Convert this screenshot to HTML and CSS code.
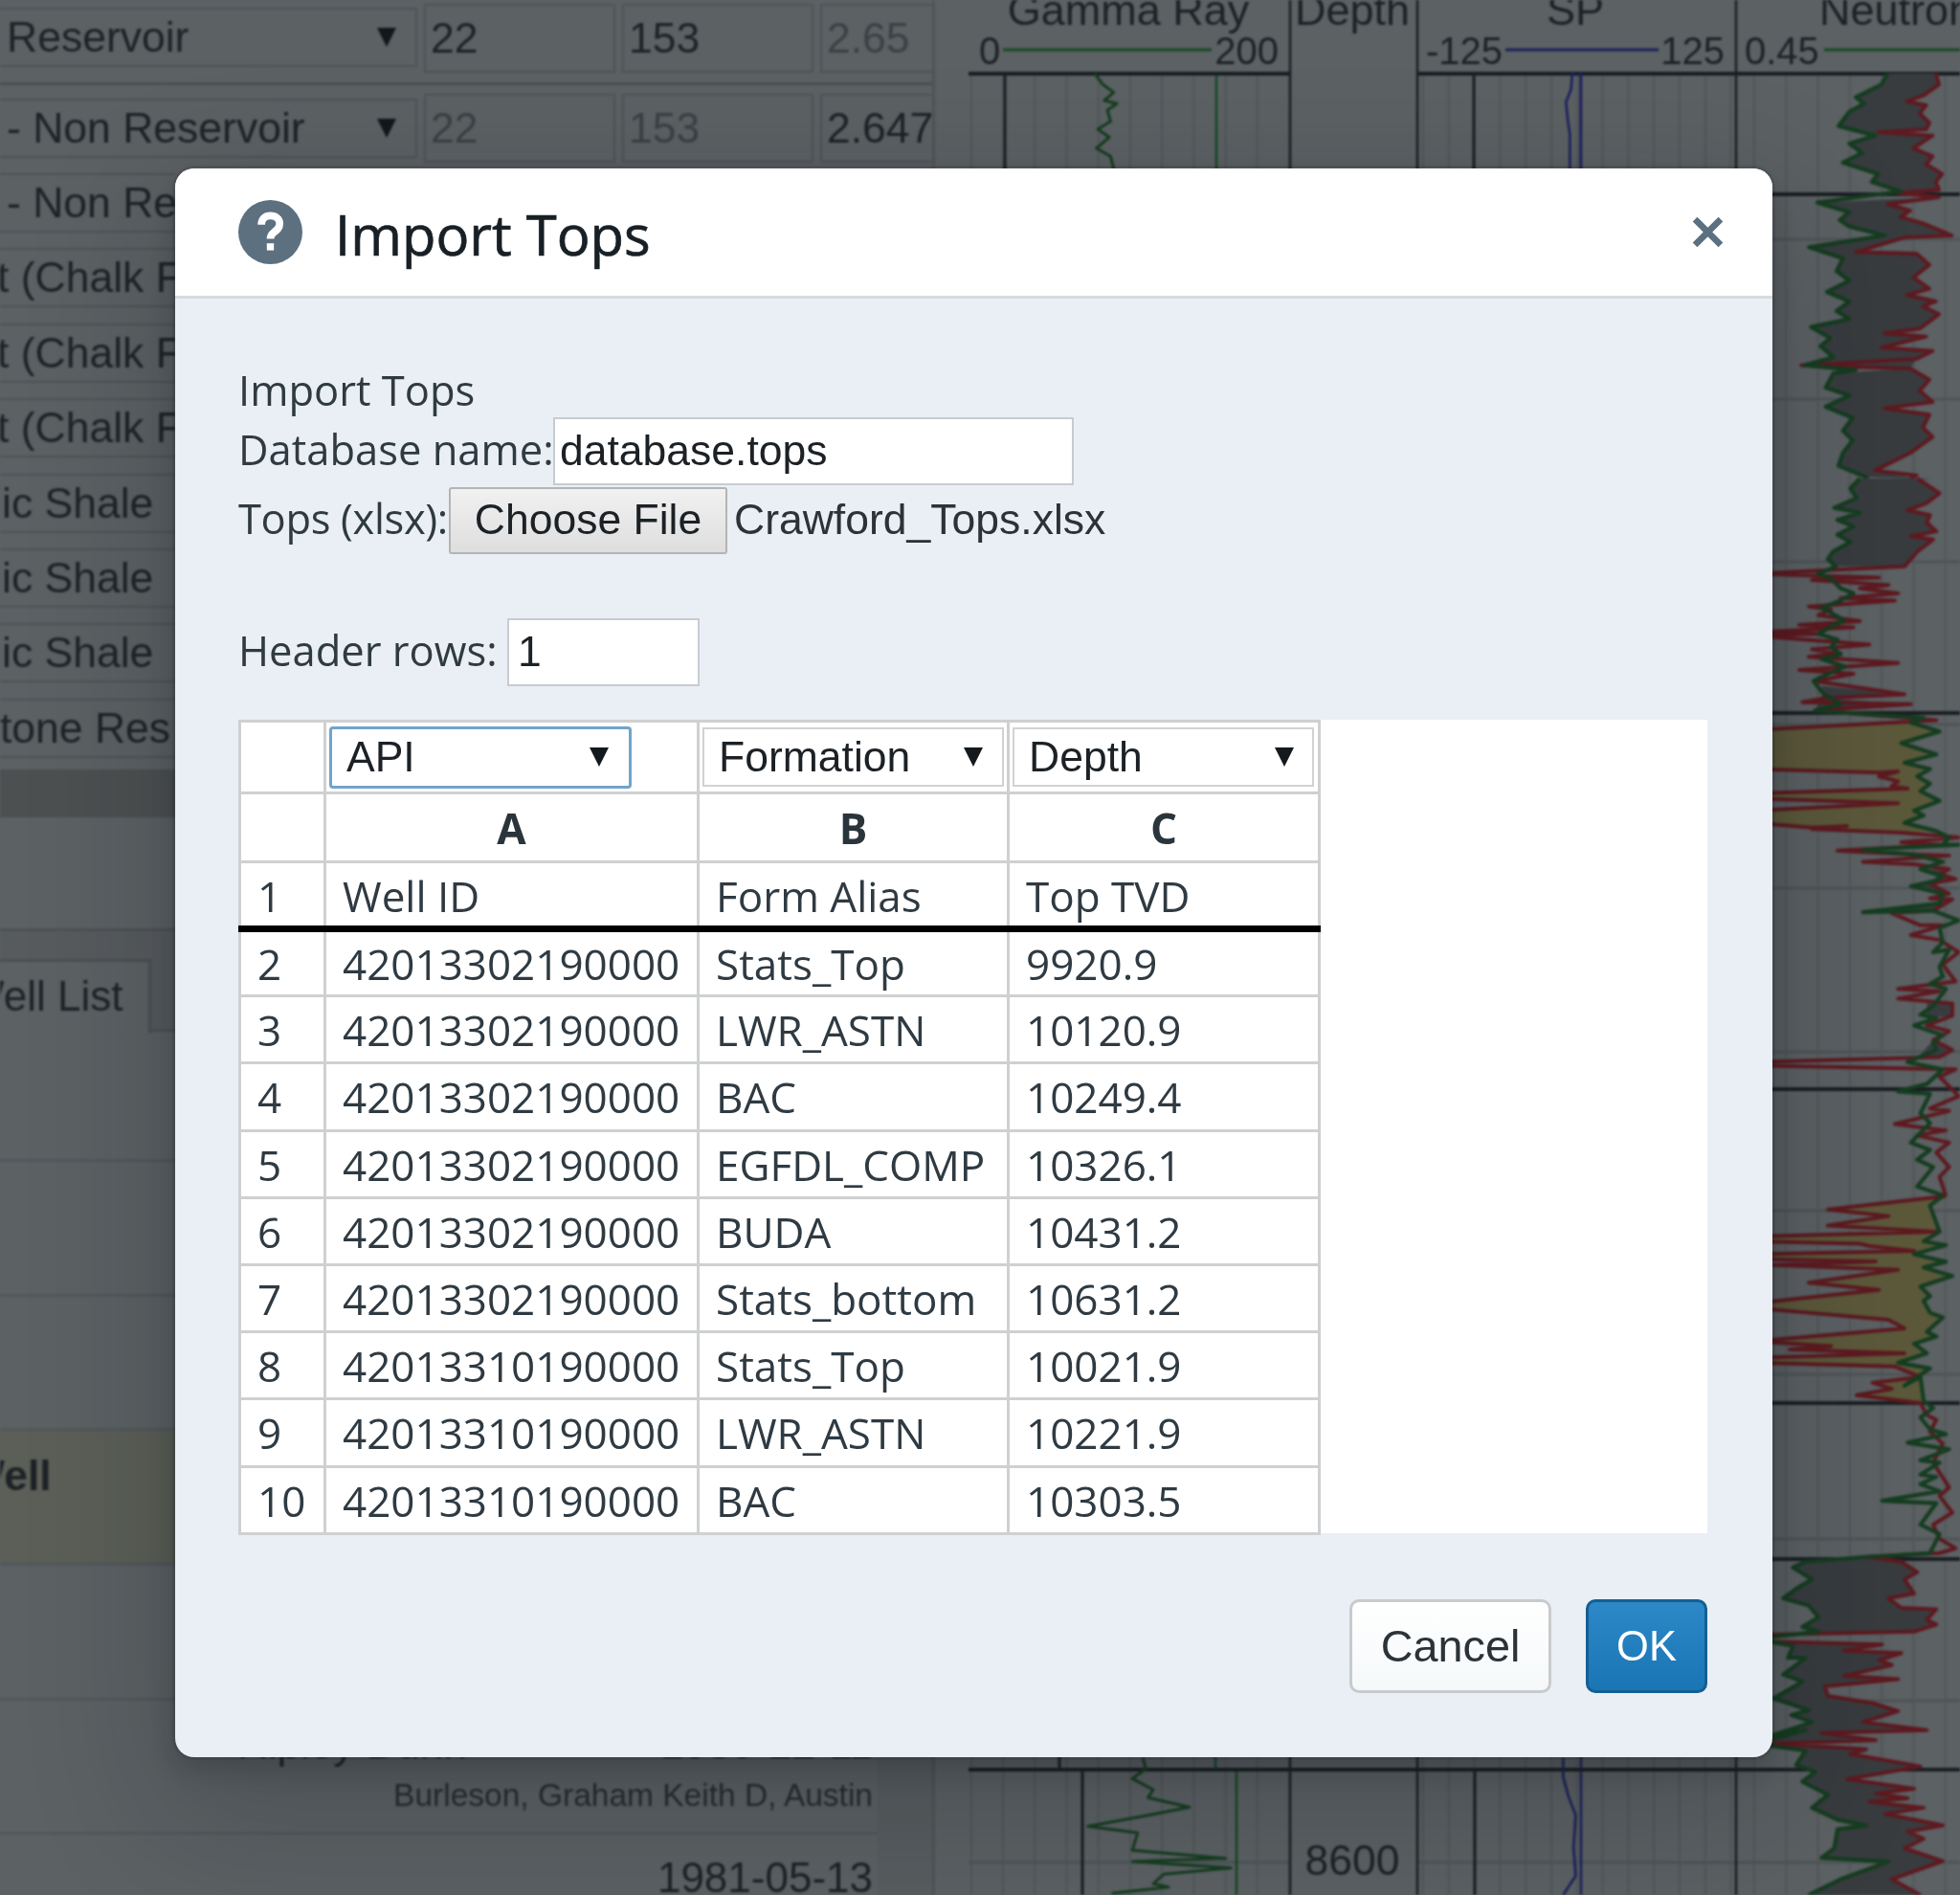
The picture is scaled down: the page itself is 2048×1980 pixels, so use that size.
FILE: index.html
```html
<!DOCTYPE html>
<html lang="en">
<head>
<meta charset="utf-8">
<title>Import Tops</title>
<link rel="stylesheet" href="styles.css">
</head>
<body>
<div class="app">
  <aside class="panel">
    <section class="formations">
      <div class="frow frow-first">
        <div class="fsel"><span>Reservoir</span><i class="arrow"></i></div>
        <input class="fnum" value="22"><input class="fnum" value="153"><input class="fnum off" value="2.65">
      </div>
      <div class="frow frow-second">
        <div class="fsel"><span>- Non Reservoir</span><i class="arrow"></i></div>
        <input class="fnum off" value="22"><input class="fnum off" value="153"><input class="fnum" value="2.647">
      </div>
      <div class="frow"><div class="fsel fsel-s"><span>- Non Re</span></div></div>
      <div class="frow"><div class="fsel fsel-s clip"><span>t (Chalk F</span></div></div>
      <div class="frow"><div class="fsel fsel-s clip"><span>t (Chalk F</span></div></div>
      <div class="frow"><div class="fsel fsel-s clip"><span>t (Chalk F</span></div></div>
      <div class="frow"><div class="fsel fsel-s clip clip-ic"><span>ic Shale</span></div></div>
      <div class="frow"><div class="fsel fsel-s clip clip-ic"><span>ic Shale</span></div></div>
      <div class="frow"><div class="fsel fsel-s clip clip-ic"><span>ic Shale</span></div></div>
      <div class="frow"><div class="fsel fsel-s clip clip-tone"><span>tone Res</span></div></div>
    </section>
    <div class="band"></div>
    <div class="tabs"><div class="tab">Well List</div></div>
    <div class="wells">
      <div class="list">
        <div class="well well-first"></div>
        <div class="well"></div>
        <div class="well"></div>
        <div class="well well-on"><b>Well</b></div>
        <div class="well"></div>
        <div class="well well-meta">
          <div class="meta-top"><span>Ripley Dunn</span><span>1980-12-11</span></div>
          <div class="meta-sub">Burleson, Graham Keith D, Austin</div>
        </div>
        <div class="well well-date"><div class="meta-top"><span></span><span>1981-05-13</span></div></div>
      </div>
      <div class="rail"></div>
    </div>
  </aside>
  <main class="logs">
    <svg class="logsvg" viewBox="1012 0 1036 1980" width="1036" height="1980" xmlns="http://www.w3.org/2000/svg">
      <defs>
        <pattern id="g33" x="1014" y="0" width="33.2" height="10" patternUnits="userSpaceOnUse"><rect width="2" height="10" class="gridfill"/></pattern>
        <pattern id="g27" x="1486" y="0" width="26.8" height="10" patternUnits="userSpaceOnUse"><rect width="2" height="10" class="gridfill"/></pattern>
        <pattern id="g33n" x="1832" y="0" width="33.3" height="10" patternUnits="userSpaceOnUse"><rect width="2" height="10" class="gridfill"/></pattern>
      </defs>
      <rect x="1012" y="77" width="336" height="1903" fill="url(#g33)"/>
      <rect x="1481" y="77" width="333" height="1903" fill="url(#g27)"/>
      <rect x="1814" y="77" width="234" height="1903" fill="url(#g33n)"/>

      <path class="minor" d="M1012 250H1348M1481 250H2048M1012 417H1348M1481 417H2048M1012 587H1348M1481 587H2048M1012 757H1348M1481 757H2048M1012 928H1348M1481 928H2048M1012 1099H1348M1481 1099H2048M1012 1265H1348M1481 1265H2048M1012 1436H1348M1481 1436H2048M1012 1608H1348M1481 1608H2048M1012 1777H1348M1481 1777H2048M1012 1946H1348M1481 1946H2048"/>

      <path class="major" d="M1050 77V203M1107 1629V1849M1131 1849V1980M1540 77V203M1541 1849V1980"/>
      <path class="gvert" d="M1271 77V203M1270 1629V1849M1292 1849V1980"/>
      <path class="bvert" d="M1652 77V203M1652 1629V1980"/>
      <path class="divider" d="M1348 0V1980M1481 0V1980M1814 0V1980"/>
      <path class="thick" d="M1012 77H1348M1481 77H2048M1012 203H2048M1012 745H2048M1012 1138H2048M1012 1466H2048M1012 1629H2048M1012 1849H2048"/>

      <g class="z2">
        <polygon class="fill-dark" points="1455,230 1445,265 1405,305 1418,325 1395,350 1378,395 1435,425 1395,450 1415,480 1385,510 1440,545 1430,570 1475,600 1470,605 1535,595 1530,570 1540,545 1515,515 1525,490 1495,465 1525,425 1440,415 1515,405 1520,385 1505,355 1515,330 1485,318 1510,300 1535,265 1530,230"/>
        <polygon class="fill-dark" points="1345,635 1395,665 1380,690 1395,710 1450,738 1332,775 1385,810 1375,850 1395,880 1360,915 1395,945 1375,975 1395,1000 1335,1025 1365,1060 1350,1085 1370,1120 1325,1145 1490,1155 1500,1125 1525,1100 1445,1090 1515,1055 1450,1045 1505,1030 1535,985 1510,960 1530,945 1485,925 1520,905 1495,870 1520,830 1500,795 1405,790 1480,745 1555,738 1510,700 1475,680 1490,660 1455,640 1535,618"/>
        <polygon class="fill-dark" points="1370,1170 1358,1215 1395,1240 1358,1275 1400,1310 1385,1350 1400,1380 1385,1420 1378,1460 1420,1495 1500,1500 1435,1475 1490,1420 1525,1370 1510,1340 1520,1300 1450,1280 1525,1260 1505,1225 1520,1190 1490,1155"/>
        <polyline class="red" points="1530,230 1535,265 1510,300 1485,318 1515,330 1505,355 1520,385 1515,405 1440,415 1525,425 1495,465 1525,490 1515,515 1540,545 1530,570 1535,595 1470,605 1535,618 1455,640 1490,660 1475,680 1510,700 1555,738 1480,745 1405,790 1500,795 1520,830 1495,870 1520,905 1485,925 1530,945 1510,960 1535,985 1505,1030 1450,1045 1515,1055 1445,1090 1525,1100 1500,1125 1320,1145 1490,1155 1520,1190 1505,1225 1525,1260 1450,1280 1520,1300 1510,1340 1525,1370 1490,1420 1435,1475 1500,1490 1490,1500"/>
        <polyline class="green" points="1455,230 1445,265 1405,305 1418,325 1395,350 1378,395 1435,425 1395,450 1415,480 1385,510 1440,545 1430,570 1475,600 1345,635 1395,665 1380,690 1395,710 1450,738 1332,775 1385,810 1375,850 1395,880 1360,915 1395,945 1375,975 1395,1000 1335,1025 1365,1060 1350,1085 1370,1120 1325,1145 1405,1160 1370,1170 1358,1215 1395,1240 1358,1275 1400,1310 1385,1350 1400,1380 1385,1420 1378,1460 1420,1495 1425,1500"/>
        <polyline class="green thin" points="215,230 228,265 245,290 230,315 250,325 235,345 240,380 220,405 238,430 218,465 240,490 245,530"/>
        <polyline class="blue thin" points="962,225 960,280 952,320 955,380 958,420 958,530"/>
        <line class="blue thin" x1="975" y1="225" x2="975" y2="530"/>
        <line class="blue thin" x1="962" y1="225" x2="962" y2="240"/>
      </g>

      <g class="z3">
        <polygon class="fill-dark" points="430,0 400,20 420,40 350,60 430,70 360,85 410,98 360,115 400,130 345,150 330,165 355,180 570,180 610,150 660,125 590,118 670,108 640,90 650,75 580,65 640,50 680,30 610,5 650,0"/>
        <polygon class="fill-dark" points="310,425 570,442 320,450 590,462 290,475 315,440"/>
        <polygon class="fill-olive" points="590,500 680,518 560,542 670,565 570,582 650,595 610,610 650,625 620,640 680,660 600,680 630,690 570,705 670,722 560,725 280,718 390,712 280,715 100,705 100,680 550,665 100,655 100,645 580,635 530,630 550,620 490,610 550,600 490,602 100,595 100,515"/>
        <polygon class="fill-dark" points="620,800 690,815 660,825 590,835 690,850 680,870 440,888 660,885 720,862 650,860 710,850 650,830 730,820 680,810 710,800"/>
        <polygon class="fill-dark" points="640,1075 720,1075 720,1100 640,1105"/>
        <polygon class="fill-dark" points="660,1150 720,1170 680,1185 620,1180"/>
        <polyline class="red" points="610,0 680,30 640,50 580,65 650,75 640,90 670,108 590,118 660,125 610,150 570,180 100,195 490,203 280,208 520,218 430,225 550,235 370,245 540,250 270,262 340,268 300,280 430,292 240,300 410,305 100,315 300,318 100,322 460,340 280,350 370,358 270,365 550,378 240,392 410,400 290,415 570,442 320,450 250,458 590,462 290,475 670,495 100,515 100,595 490,602 550,600 490,610 550,620 530,630 580,635 100,645 100,655 550,665 100,680 100,705 280,715 390,712 280,718 560,725 740,735 560,745 690,750 360,762 440,765 600,770 710,772 440,785 600,790 710,800 680,810 730,820 650,830 710,850 650,860 720,862 660,885 530,890 620,915 690,915 590,935 680,945 740,970 690,995 730,1030 550,1045 680,1050 550,1065 720,1075 720,1100 640,1120 710,1132 660,1150 720,1170 680,1185 100,1195 100,1202 730,1210 680,1225 710,1245 740,1265 650,1290 710,1295 540,1322 700,1335 610,1345 710,1360 670,1380 710,1410 680,1430 700,1470"/>
        <polyline class="green" points="430,0 400,20 420,40 350,60 430,70 360,85 410,98 360,115 400,130 345,150 330,165 355,180 300,195 340,205 370,225 410,235 370,250 310,265 340,275 380,290 300,318 360,330 340,345 370,360 310,370 385,385 330,400 285,415 315,440 370,462 290,475 430,482 630,490 590,500 680,518 560,542 670,565 570,582 650,595 610,610 650,625 620,640 680,660 600,680 630,690 570,705 670,722 710,735 690,750 740,750 440,760 600,770 690,785 620,800 690,815 660,825 590,835 690,850 680,870 440,888 660,885 740,905 680,920 690,950 660,970 710,965 680,1000 690,1020 650,1035 700,1045 660,1080 620,1098 670,1105 600,1120 690,1140 660,1155 670,1170 580,1195 690,1210 640,1240 550,1255 650,1260 620,1300 650,1320 590,1360 650,1375 610,1395 660,1410 610,1450 700,1470"/>
      </g>

      <g class="z4">
        <polygon class="fill-olive" points="690,100 650,120 680,175 630,195 700,203 600,222 700,238 630,250 720,268 620,290 650,310 630,320 650,345 690,355 640,385 670,395 600,410 640,430 550,450 650,462 570,498 620,480 630,530 620,535 420,518 530,505 470,492 620,480 540,458 100,450 100,440 570,430 210,422 340,415 100,405 570,378 520,360 100,335 100,325 490,297 270,282 550,255 160,245 480,237 100,232 100,222 600,215 460,205 430,200 100,195 100,185 670,175 330,162 520,142 330,128"/>
        <polygon class="fill-dark" points="450,858 260,868 220,880 280,905 230,925 190,945 270,960 300,985 250,1005 300,1015 100,1030 220,1045 205,1070 260,1070 190,1105 250,1120 160,1155 270,1180 215,1190 280,1205 160,1232 260,1222 100,1250 260,1265 230,1295 290,1310 250,1330 330,1358 280,1385 360,1410 450,1422 360,1430 350,1470 310,1490 520,1498 370,1535 310,1555 270,1568 620,1568 530,1535 690,1497 570,1470 630,1450 580,1435 690,1422 600,1410 510,1398 630,1385 460,1372 580,1365 480,1355 600,1345 390,1325 620,1298 400,1272 450,1262 160,1250 480,1243 310,1228 640,1222 440,1205 550,1182 470,1165 330,1150 320,1130 550,1115 380,1108 530,1085 490,1075 560,1060 380,1055 500,1042 100,1035 100,1022 600,1015 670,1000 640,990 670,968 560,965 520,945 600,935 570,905 610,890 560,868"/>
        <polyline class="red" points="700,100 330,128 520,142 330,162 670,175 100,185 100,195 430,200 460,205 600,215 100,222 100,232 480,237 160,245 550,255 270,282 490,297 100,325 100,335 520,360 570,378 100,405 340,415 210,422 570,430 100,440 100,450 540,458 620,480 470,492 530,505 420,518 620,535 640,560 670,570 650,595 690,620 660,660 710,712 680,730 720,765 660,790 680,820 730,840 680,850 450,858 560,868 610,890 570,905 600,935 520,945 560,965 670,968 640,990 670,1000 600,1015 100,1022 100,1035 500,1042 380,1055 560,1060 490,1075 530,1085 380,1108 550,1115 320,1130 330,1150 470,1165 550,1182 440,1205 640,1222 310,1228 480,1243 160,1250 450,1262 400,1272 620,1298 390,1325 600,1345 480,1355 580,1365 460,1372 630,1385 510,1398 600,1410 690,1422 580,1435 630,1450 570,1470 690,1497 530,1535 620,1568"/>
        <polyline class="green" points="690,100 650,120 680,175 630,195 700,203 600,222 700,238 630,250 720,268 620,290 650,310 630,320 650,345 690,355 640,385 670,395 600,410 640,430 550,450 650,462 570,498 620,480 630,530 660,545 620,565 650,590 700,600 580,618 710,632 620,655 680,660 620,685 670,690 620,705 680,720 500,740 670,745 620,790 680,810 650,850 450,858 260,868 220,880 280,905 230,925 190,945 270,960 300,985 250,1005 300,1015 100,1030 220,1045 205,1070 260,1070 190,1105 250,1120 160,1155 270,1180 215,1190 280,1205 160,1232 260,1222 100,1250 260,1265 230,1295 290,1310 250,1330 330,1358 280,1385 360,1410 450,1422 360,1430 350,1470 310,1490 520,1498 370,1535 310,1555 270,1568"/>
      </g>

      <g class="z6">
        <polyline class="green thin" points="935,170 938,205 925,235 945,270 940,295 960,310 980,325 940,350 882,385 930,405 925,460 1015,485 925,495 1020,515 955,535 945,565 960,575 905,595"/>
        <polyline class="blue thin" points="1340,170 1340,230 1345,290 1352,350 1350,450 1352,540 1340,600"/>
      </g>

      <text class="lt" x="1179" y="26" text-anchor="middle">Gamma Ray</text>
      <text class="lt" x="1413" y="26" text-anchor="middle">Depth</text>
      <text class="lt" x="1646" y="26" text-anchor="middle">SP</text>
      <text class="lt" x="1901" y="26">Neutron</text>
      <text class="ls" x="1023" y="67">0</text>
      <text class="ls" x="1336" y="67" text-anchor="end">200</text>
      <text class="ls" x="1490" y="67">-125</text>
      <text class="ls" x="1802" y="67" text-anchor="end">125</text>
      <text class="ls" x="1823" y="67">0.45</text>
      <line class="gscale" x1="1048" y1="52" x2="1266" y2="52"/>
      <line class="bscale" x1="1573" y1="52" x2="1733" y2="52"/>
      <line class="gscale" x1="1906" y1="52" x2="2048" y2="52"/>
      <text class="ld" x="1413" y="1959" text-anchor="middle">8600</text>
    </svg>
  </main>
</div>

<div class="backdrop"></div>

<div class="dialog">
  <header class="dlg-head">
    <svg class="dlg-icon" viewBox="0 0 20 20" xmlns="http://www.w3.org/2000/svg">
      <circle cx="10" cy="10" r="10" class="help-disc"/>
      <path class="help-mark" d="M7.2 7.7C7.2 5.9 8.4 4.9 10 4.9c1.7 0 2.9 1 2.9 2.5 0 1.3-.8 1.9-1.7 2.6-.8.6-1.2 1.1-1.2 2.1"/>
      <rect class="help-dot" x="8.9" y="13.5" width="2.2" height="2.2"/>
    </svg>
    <h1 class="dlg-title">Import Tops</h1>
    <svg class="dlg-close" viewBox="0 0 32 32" xmlns="http://www.w3.org/2000/svg"><path d="M3 3L29 29M29 3L3 29"/></svg>
  </header>
  <div class="dlg-body">
    <div class="line line-title">Import Tops</div>
    <div class="line line-db"><label class="lab lab-db">Database name:</label><input class="txt txt-db" value="database.tops"></div>
    <div class="line line-file"><label class="lab lab-file">Tops (xlsx):</label><button class="filebtn">Choose File</button><span class="filename">Crawford_Tops.xlsx</span></div>
    <div class="line line-hdr"><label class="lab lab-hdr">Header rows:</label><input class="txt txt-hdr" value="1"></div>
    <div class="sheet">
      <table class="grid">
        <colgroup><col class="c0"><col class="c1"><col class="c2"><col class="c3"></colgroup>
        <tr class="r-pick">
          <td></td>
          <td><div class="pick pick-focus"><span>API</span><i class="arrow"></i></div></td>
          <td><div class="pick pick-b"><span>Formation</span><i class="arrow"></i></div></td>
          <td><div class="pick pick-c"><span>Depth</span><i class="arrow"></i></div></td>
        </tr>
        <tr class="r-head"><td></td><th>A</th><th>B</th><th>C</th></tr>
        <tr class="r-title"><td>1</td><td>Well ID</td><td>Form Alias</td><td>Top TVD</td></tr>
        <tr><td>2</td><td>42013302190000</td><td>Stats_Top</td><td>9920.9</td></tr>
        <tr><td>3</td><td>42013302190000</td><td>LWR_ASTN</td><td>10120.9</td></tr>
        <tr><td>4</td><td>42013302190000</td><td>BAC</td><td>10249.4</td></tr>
        <tr><td>5</td><td>42013302190000</td><td>EGFDL_COMP</td><td>10326.1</td></tr>
        <tr><td>6</td><td>42013302190000</td><td>BUDA</td><td>10431.2</td></tr>
        <tr><td>7</td><td>42013302190000</td><td>Stats_bottom</td><td>10631.2</td></tr>
        <tr><td>8</td><td>42013310190000</td><td>Stats_Top</td><td>10021.9</td></tr>
        <tr><td>9</td><td>42013310190000</td><td>LWR_ASTN</td><td>10221.9</td></tr>
        <tr><td>10</td><td>42013310190000</td><td>BAC</td><td>10303.5</td></tr>
      </table>
    </div>
    <footer class="dlg-foot">
      <button class="btn btn-cancel">Cancel</button>
      <button class="btn btn-ok">OK</button>
    </footer>
  </div>
</div>
</body>
</html>
```

FILE: styles.css
```css
* { box-sizing: border-box; }
html, body { margin: 0; padding: 0; }
body {
  width: 2048px;
  height: 1980px;
  overflow: hidden;
  background: #a8acae;
  font-family: "Liberation Sans", Arial, sans-serif;
  color: #2c3034;
  position: relative;
}
.app { display: flex; width: 2048px; height: 1980px; overflow: hidden; filter: blur(.9px); }

/* left panel */
.panel {
  width: 977px;
  flex: none;
  height: 1980px;
  overflow: hidden;
  border-right: 3px solid #909496;
}
.formations { display: flex; flex-direction: column; }
.frow { display: flex; height: 78.4px; gap: 7px; align-items: flex-start; flex: none; }
.frow-first { height: 89px; padding-top: 4px; border-bottom: 3px solid #868a8c; }
.frow-second { height: 89px; padding-top: 9px; }
.fsel {
  width: 436px;
  height: 62px;
  margin-top: 3px;
  flex: none;
  border: 2px solid #8f9395;
  border-left: 0;
  display: flex;
  align-items: center;
  justify-content: space-between;
  padding: 0 20px 0 7px;
  font-size: 44.5px;
  white-space: nowrap;
  overflow: hidden;
}
.fsel-s { width: 183px; border-right: 0; padding-right: 0; }
.frow-first .fsel { margin-top: 4px; }
.frow-second .fsel { margin-top: 5px; }
.fsel.clip { padding-left: 0; }
.fsel.clip span { margin-left: -3px; }
.fsel.clip-ic span { margin-left: 2px; }
.fsel.clip-tone span { margin-left: 0; }
.fnum {
  width: 200px;
  height: 72px;
  flex: none;
  font: 44.5px "Liberation Sans", Arial, sans-serif;
  color: #2c3034;
  background: transparent;
  border: 2px solid #8f9395;
  padding: 0 5px;
  border-radius: 0;
}
.fnum.off { color: #686c6f; }
.arrow {
  display: block;
  width: 0;
  height: 0;
  flex: none;
  border-left: 10px solid transparent;
  border-right: 10px solid transparent;
  border-top: 20px solid #14191d;
}
.band { height: 50px; background: #8a8a88; margin-bottom: 116px; margin-top: -1px; }
.tabs {
  height: 108px;
  padding-top: 29px;
  background: #9ea0a2;
  border-top: 3px solid #8a8e90;
  border-bottom: 3px solid #8a8e90;
  display: flex;
}
.tab {
  width: 158px;
  height: 78px;
  background: #a8acae;
  border-top: 3px solid #85898b;
  border-right: 3px solid #85898b;
  font-size: 44px;
  line-height: 72px;
  text-indent: -37px;
  white-space: nowrap;
  overflow: hidden;
}
.wells { display: flex; }
.list { width: 917px; flex: none; }
.rail { flex: 1; background: #a0a4a6; min-height: 902px; }
.well { height: 140.6px; border-bottom: 3px solid #969a9c; overflow: hidden; white-space: nowrap; }
.well-first { height: 136px; }
.well-on { background: #a6a894; padding-top: 22px; font-size: 44.5px; }
.well-on b { display: block; margin-left: -37px; }
.well-meta { padding-top: 19px; }
.meta-top { display: flex; justify-content: space-between; font-size: 44px; line-height: 52px; padding: 0 5px 0 248px; }
.meta-sub { font-size: 33.5px; line-height: 42px; text-align: right; padding-right: 5px; margin-top: 7px; color: #3c4144; }
.well-date { padding-top: 19px; border-bottom: 0; }

/* logs */
.logs { margin-left: 35px; width: 1036px; height: 1980px; flex: none; }
.logsvg { display: block; overflow: hidden; }
.gridfill { fill: #94989a; }
.minor { stroke: #8e9294; stroke-width: 3; fill: none; }
.major { stroke: #22262a; stroke-width: 3; fill: none; }
.gvert { stroke: #1f7a2d; stroke-width: 2.5; fill: none; }
.bvert { stroke: #262aa0; stroke-width: 2.5; fill: none; }
.divider { stroke: #24282c; stroke-width: 2.5; fill: none; }
.thick { stroke: #24282c; stroke-width: 4; fill: none; }
.z2 { transform: translate(1000px, 0) scale(.6684, .3333); }
.z3 { transform: translate(1800px, 500px) scale(.3333, .5102); }
.z4 { transform: translate(1800px, 1200px) scale(.3333, .4974); }
.z6 { transform: translate(180px, 1780px) scale(1.0846, .3333); }
.red, .green, .blue { fill: none; stroke-linejoin: round; vector-effect: non-scaling-stroke; }
.red { stroke: #ac1e26; stroke-width: 4; }
.green { stroke: #1a6426; stroke-width: 4.2; }
.blue { stroke: #262aa0; stroke-width: 2.6; }
.green.thin { stroke-width: 3; }
.fill-dark { fill: #606264; }
.fill-olive { fill: #a89c5c; }
.lt { font-size: 45px; fill: #2a2e32; }
.ls { font-size: 40px; fill: #2a2e32; }
.ld { font-size: 44.5px; fill: #2a2e32; }
.gscale { stroke: #1f7c2c; stroke-width: 3; }
.bscale { stroke: #262aa0; stroke-width: 3; }

/* backdrop + dialog */
.backdrop { position: absolute; inset: 0; background: rgba(16, 22, 26, .5); }
.dialog {
  position: absolute;
  left: 183px;
  top: 176px;
  width: 1669px;
  height: 1660px;
  background: #e9eff5;
  border-radius: 20px;
  box-shadow: 0 0 0 3px rgba(16, 22, 26, .1), 0 12px 26px rgba(16, 22, 26, .2), 0 50px 140px 18px rgba(16, 22, 26, .2);
  font-family: "Open Sans", sans-serif;
  color: #2f3a42;
  font-size: 43.5px;
  overflow: hidden;
  filter: blur(.5px);
}
.dlg-head {
  height: 136px;
  background: #fff;
  border-bottom: 3px solid #d6dbdf;
  display: flex;
  align-items: center;
  padding: 0 51px 2px 66px;
}
.dlg-icon { width: 67px; height: 67px; flex: none; margin-top: 2px; }
.help-disc { fill: #5c7080; }
.help-mark { fill: none; stroke: #fff; stroke-width: 2.3; }
.help-dot { fill: #fff; }
.dlg-title { margin: 6px 0 0 34px; font-size: 58px; font-weight: 400; color: #182026; line-height: 1; -webkit-text-stroke: .7px #182026; }
.dlg-close { width: 33px; height: 33px; margin-left: auto; margin-top: 2px; flex: none; }
.dlg-close path { stroke: #5c7080; stroke-width: 6.5; fill: none; }

.dlg-body { padding: 66px 68px 0 67px; }
.line { display: flex; align-items: center; }
.line-title { height: 58px; margin-left: -1px; }
.line-db { height: 71px; margin-bottom: 2px; }
.line-file { height: 70px; margin-bottom: 67px; }
.line-hdr { height: 71px; margin-bottom: 35px; }
.lab { flex: none; white-space: nowrap; padding-bottom: 5px; margin-left: -1px; }
.lab-db { width: 329px; }
.lab-file { width: 220px; letter-spacing: -.35px; }
.lab-hdr { width: 281px; }
.txt {
  height: 71px;
  background: #fff;
  border: 2px solid #c8ccd0;
  font: 44.5px "Liberation Sans", Arial, sans-serif;
  color: #1c2126;
  padding: 0 5px 2px;
  border-radius: 0;
}
.txt-db { width: 544px; }
.txt-hdr { width: 201px; padding-left: 9px; }
.filebtn {
  width: 291px;
  height: 70px;
  background: linear-gradient(#f1f1f1, #dedede);
  border: 2px solid #b4b4b4;
  border-radius: 3px;
  font: 44.5px "Liberation Sans", Arial, sans-serif;
  color: #1c2126;
  padding: 0 0 2px;
  flex: none;
}
.filename { margin: 0 0 2px 7px; font: 44.5px "Liberation Sans", Arial, sans-serif; color: #2c3237; }

.sheet { background: #fff; height: 850px; }
.grid { border-collapse: collapse; table-layout: fixed; width: 1128px; margin-left: -1px; }
.c0 { width: 89px; }
.c1 { width: 390px; }
.c2 { width: 324px; }
.c3 { width: 325px; }
.grid td, .grid th {
  border: 3px solid #cfd0d1;
  height: 70.2px;
  padding: 1px 0 0 17px;
  font-size: 44px;
  line-height: 1;
  background: #fff;
  white-space: nowrap;
}
.grid th { text-align: center; padding: 0; font-weight: 700; color: #2a343b; }
.r-pick td { height: 75px; padding: 0 0 0 3px; }
.r-head th, .r-head td { height: 72px; }
.r-title td { height: 70px; padding-top: 2px; border-bottom: 7px solid #000; }
.pick {
  height: 62px;
  width: 315px;
  display: flex;
  align-items: center;
  justify-content: space-between;
  padding: 0 21px 0 15px;
  font: 44.5px "Liberation Sans", Arial, sans-serif;
  color: #1c2126;
  border: 2px solid #d0d2d4;
  background: #fff;
}
.pick-focus { border: 3px solid #70a4cc; border-radius: 4px; height: 65px; width: 316px; padding-right: 21px; }
.pick-b { padding-right: 20px; }
.pick-c { padding-right: 19px; }

.dlg-foot { display: flex; justify-content: flex-end; gap: 36px; margin-top: 69px; }
.btn { height: 98px; border-radius: 10px; font: 46.8px "Liberation Sans", Arial, sans-serif; padding: 0; }
.btn-cancel { width: 211px; background: linear-gradient(#fff, #f5f8fa); border: 3px solid #c8cbcd; color: #2b3238; }
.btn-ok { width: 127px; background: linear-gradient(#2d88c7, #1a75b5); border: 3px solid #145f92; color: #fff; font-size: 43.5px; }
```
